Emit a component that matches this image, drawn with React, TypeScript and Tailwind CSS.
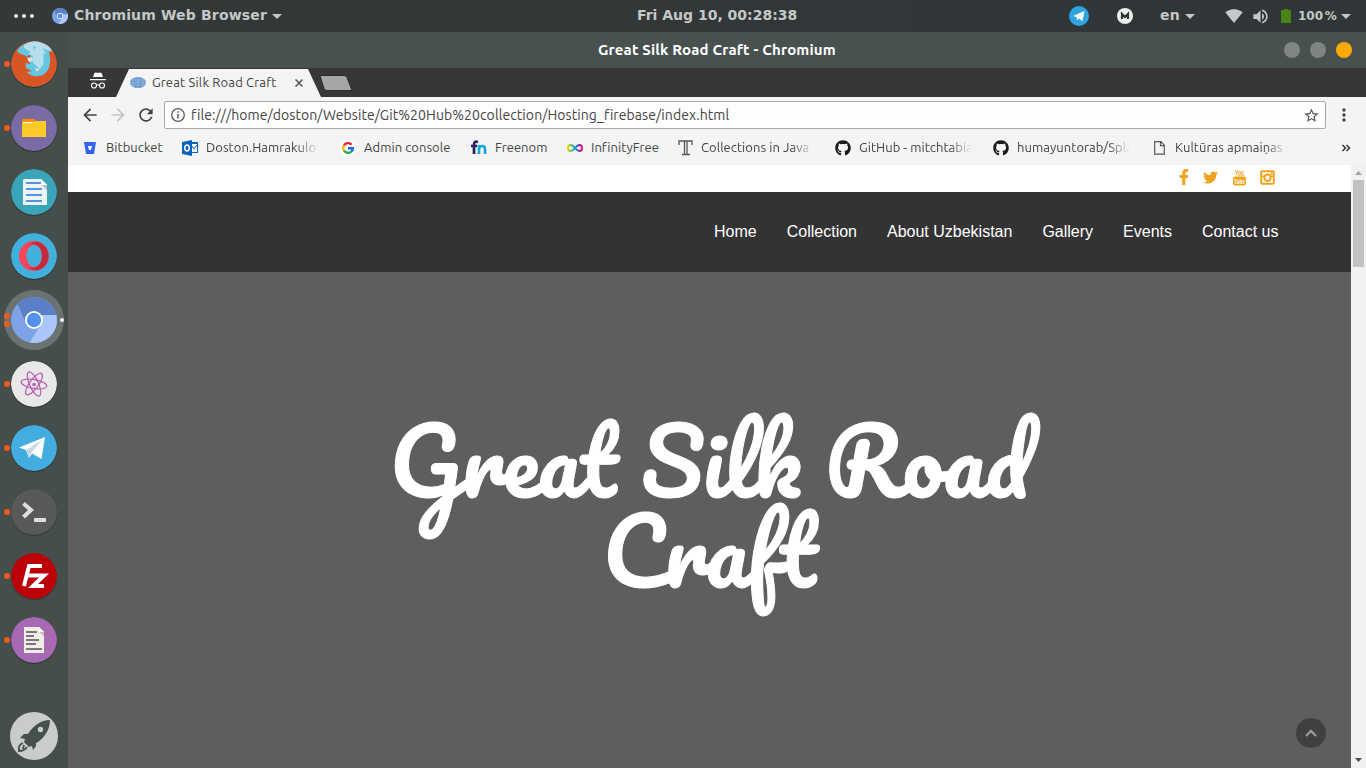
import type { ReactNode } from "react";
import { FaFacebookF, FaTwitter, FaGithub } from "react-icons/fa";
import { MdSignalWifi4Bar, MdVolumeUp, MdArrowBack, MdArrowForward, MdRefresh, MdStarBorder, MdMoreVert } from "react-icons/md";

function Caret() {
  return <svg width="10" height="5" viewBox="0 0 10 5" className="shrink-0" fill="#c5c8c6"><path d="M0 0h10L5 5z" /></svg>;
}

function ChromiumIcon({ size }: { size: number }) {
  return (
    <svg width={size} height={size} viewBox="0 0 46 46" className="block shrink-0">
      <circle cx="23" cy="23" r="23" fill="#7ea3e8" />
      <path d="M6.500 7A23 23 0 0 1 45.400 18H23L15 26z" fill="#5b80c8" />
      <path d="M45.400 18A23 23 0 0 1 18.700 45.600L29 29 23 18z" fill="#aac6fa" />
      <circle cx="23" cy="23" r="9" fill="#fff" />
      <circle cx="23" cy="23" r="7.200" fill="#5490ee" />
    </svg>
  );
}

function GoogleIcon() {
  return (
    <svg width="16" height="16" viewBox="0 0 16 16" fill="none" strokeWidth="2.400">
      <circle cx="8" cy="8" r="8" fill="#fff" />
      <path d="M4 5.400A4.800 4.800 0 0 1 11.500 4.600" stroke="#f5182d" />
      <path d="M4 5.400A4.800 4.800 0 0 0 4 10.700" stroke="#fbbc05" />
      <path d="M4 10.700A4.800 4.800 0 0 0 11.200 11.600" stroke="#19b34a" />
      <path d="M8 8.200h4.900A4.800 4.800 0 0 1 11.200 11.600" stroke="#1769f0" />
    </svg>
  );
}

function TopBar() {
  return (
    <header className="flex h-8 shrink-0 items-center bg-[linear-gradient(90deg,#333838,#303637)] font-['DejaVu_Sans'] text-[14px] font-bold text-[#c5c8c6]">
      <div className="flex w-[637px] items-center">
        <svg width="20" height="4" className="ml-[14px]" fill="#e8e8e8"><circle cx="2" cy="2" r="2" /><circle cx="10" cy="2" r="2" /><circle cx="18" cy="2" r="2" /></svg>
        <div className="ml-[18px]"><ChromiumIcon size={16} /></div>
        <span className="ml-[6px] w-[194px] whitespace-nowrap pb-[2px] tracking-[0.16px]">Chromium Web Browser</span>
        <div className="ml-[4px]"><Caret /></div>
      </div>
      <span className="w-[432px] whitespace-nowrap pb-[2px]">Fri Aug 10, 00:28:38</span>
      <svg width="20" height="20" viewBox="0 0 20 20" className="shrink-0"><circle cx="10" cy="10" r="10" fill="#2ca5e0" /><path d="M4 10 15.500 5 13.500 15 9.500 12.500 7.800 14.500V11.200z" fill="#fff" /></svg>
      <svg width="16" height="16" viewBox="0 0 16 16" className="ml-7 shrink-0"><circle cx="8" cy="8" r="8" fill="#eee" /><path d="M5 11V6l3 3 3-3v5" fill="none" stroke="#333" strokeWidth="2.200" /></svg>
      <span className="ml-[27px] w-[25px] pb-[2px] tracking-[0.3px]">en</span>
      <Caret />
      <MdSignalWifi4Bar className="ml-[30px] size-[18px] shrink-0" />
      <MdVolumeUp className="ml-[8px] size-[19px] shrink-0" />
      <svg width="10" height="14" className="ml-[11px] shrink-0" fill="#4a8416"><path d="M0 1h3V0h4v1h3v13H0z" /></svg>
      <span className="ml-[7px] w-[43px] whitespace-nowrap text-[12px] [word-spacing:-2.500px]">100 %</span>
      <Caret />
    </header>
  );
}

function Launcher({ dots = 0, children }: { dots?: number; children: ReactNode }) {
  return (
    <div className="flex h-16 w-full shrink-0 items-center">
      <div className="flex w-[11px] shrink-0 flex-col items-start gap-[2px] pl-1">
        {dots > 0 && <i className="size-[6px] rounded-full bg-[#ee5a24]" />}
        {dots > 1 && <i className="size-[6px] rounded-full bg-[#ee5a24]" />}
      </div>
      {children}
    </div>
  );
}

const disc = "block shrink-0 rounded-full shadow-[0_1px_1px_#0005]";

function Sidebar() {
  return (
    <aside className="flex w-[68px] shrink-0 flex-col bg-[#464e4c]">
      <Launcher dots={1}>
        <svg className={disc} width="46" height="46" viewBox="0 0 46 46">
          <circle cx="23" cy="23" r="23" fill="#d85626" />
          <path d="M6 10C12 0 32-5 42 12 39 9 37 10 39 16 40 24 37 34 28 35c-5 1-10-1-12-4l5-1c-3-2-8-2-6-8l4 1c0-3-3-3-3-7-3-3-7-2-10-6z" fill="#66c5df" />
          <path d="M13 4c5-4 13-5 18-2 5 1 8 3 10 8l-5-1-4-2 3 6-2-1c2 6 1 9-2 13l-3 4c-1-5-6-5-7-10l1-4-4-1 1-4-3-1-3-2z" fill="#b7deed" />
          <path d="M6 10l4-5 2 3 3-1-3 4zM22 5l3 1-2 3zM32 12l3 5-2 8z" fill="#66c5df" />
          <path d="M17 16l5 1-2 4-3-1zM24 27l4 1-2 3z" fill="#f2dfcf" /><path d="M16 15l4-1-2 3z" fill="#bd3d25" />
        </svg>
      </Launcher>
      <Launcher dots={1}>
        <svg className={disc} width="46" height="46" viewBox="0 0 46 46"><circle cx="23" cy="23" r="23" fill="#7a6ba4" /><path d="M11 14h13v5H11z" fill="#fb8c00" /><path d="M12 17h11v3H12z" fill="#fff" /><path d="M11 18h10l3-2h11v16H11z" fill="#ffca28" /></svg>
      </Launcher>
      <Launcher>
        <svg className={disc} width="46" height="46" viewBox="0 0 46 46"><circle cx="23" cy="23" r="23" fill="#3aa4b8" /><path d="M13 10h17l6 6v20H12V11z" fill="#eef3f3" /><path d="M30 10l6 6v5l-6-5z" fill="#b9c4c8" /><path d="M30 10l6 6h-6z" fill="#fff" /><path d="M15 14h15M15 20h16M15 26h16M15 32h16" stroke="#5294e2" strokeWidth="2" /></svg>
      </Launcher>
      <Launcher>
        <svg className={disc} width="46" height="46" viewBox="0 0 46 46"><circle cx="23" cy="23" r="23" fill="#41b0dc" /><circle cx="23" cy="23" r="15" fill="#fc4457" /><path d="M18 12c4-4 9-4 12-2a15 15 0 0 1 0 26c-3 2-8 2-12-2 8 3 13-3 13-11s-5-14-13-11z" fill="#c12b3e" /><ellipse cx="23" cy="23" rx="7.700" ry="11" fill="#41b0dc" /></svg>
      </Launcher>
      <div className="flex h-16 shrink-0 items-center pl-1">
        <div className="flex size-[60px] items-center rounded-full bg-[#6b7372]">
          <div className="flex w-[7px] shrink-0 flex-col gap-[2px]"><i className="size-[6px] rounded-full bg-[#ee5a24]" /><i className="size-[6px] rounded-full bg-[#ee5a24]" /></div>
          <ChromiumIcon size={46} />
          <i className="ml-[3px] size-1 shrink-0 rounded-full bg-white" />
        </div>
      </div>
      <Launcher dots={1}>
        <svg className={disc} width="46" height="46" viewBox="0 0 46 46"><circle cx="23" cy="23" r="23" fill="#e8e8e8" /><g fill="none" stroke="#b85bb0" strokeWidth="1.200"><ellipse cx="23" cy="23" rx="13" ry="4.500" transform="rotate(10 23 23)" /><ellipse cx="23" cy="23" rx="13" ry="4.500" transform="rotate(66 23 23)" /><ellipse cx="23" cy="23" rx="13" ry="4.500" transform="rotate(-54 23 23)" /></g><circle cx="23" cy="23.500" r="1.700" fill="#b85bb0" /></svg>
      </Launcher>
      <Launcher dots={1}>
        <svg className={disc} width="46" height="46" viewBox="0 0 46 46"><circle cx="23" cy="23" r="23" fill="#43ade0" /><path d="M8 22.500 34 12 30.500 34 21 28.500 18 33 15 25z" fill="#fff" /><path d="M15 25 31 15 20 28 18 33z" fill="#c8d6e8" /></svg>
      </Launcher>
      <Launcher dots={1}>
        <svg className={disc} width="46" height="46" viewBox="0 0 46 46"><circle cx="23" cy="23" r="23" fill="#595959" /><path d="M12.500 14.500 20 21l-7.500 7M23 31h12" fill="none" stroke="#ddd" strokeWidth="4" /></svg>
      </Launcher>
      <Launcher dots={1}>
        <svg className={disc} width="46" height="46" viewBox="0 0 46 46"><circle cx="23" cy="23" r="23" fill="#bc0208" /><path d="M13 33 18 13H31M16 22.500H26M22 22.500H33L22 33H33" fill="none" stroke="#fff" strokeWidth="4" /></svg>
      </Launcher>
      <Launcher dots={1}>
        <svg className={disc} width="46" height="46" viewBox="0 0 46 46"><circle cx="23" cy="23" r="23" fill="#a769b2" /><path d="M13 10h15l5 5v21H13z" fill="#eeeee3" /><path d="M28 10l5 5v4l-5-4z" fill="#bdbdb5" /><path d="M28 10l5 5h-5z" fill="#fff" /><path d="M15 15h11M15 19h8M15 23h13M15 27h10M15 32h16" stroke="#846f8b" strokeWidth="2" /></svg>
      </Launcher>
      <div className="mt-auto flex h-16 items-center pl-[10px]">
        <svg width="48" height="48" viewBox="0 0 48 48"><circle cx="24" cy="24" r="24" fill="#c9cccb" /><path d="M40 8c0 8-4 16-12 22l-2 1v3l-3 4-1-4-3 1-5-5 1-3-5-1 4-4h4C23 14 31 8 40 8z" fill="#46504e" /><circle cx="30.500" cy="17.500" r="2.700" fill="#c9cccb" /><path d="M13 31c-5 2-4 5-4 8 4 0 6-1 8-4M14 33l-1 4" fill="none" stroke="#46504e" strokeWidth="1.800" /></svg>
      </div>
    </aside>
  );
}

function TabStrip() {
  return (
    <div className="flex h-[29px] shrink-0 bg-[#373737]">
      <svg width="18" height="18" viewBox="0 0 18 18" className="ml-[21px] mt-[4px] shrink-0"><path d="M5.500 1l1.500-.5 2 .5 2-.5 1.500.5 1.500 4H4zM1 7h16v1.300H1z" fill="#fff" /><circle cx="5" cy="13.500" r="2.500" fill="none" stroke="#fff" strokeWidth="1.200" /><circle cx="13" cy="13.500" r="2.500" fill="none" stroke="#fff" strokeWidth="1.200" /><path d="M7.500 13h3" stroke="#fff" /></svg>
      <div className="ml-[9px] flex w-[205px] items-center bg-[#f4f4f4] pl-[14px] [clip-path:polygon(0_100%,13px_1px,192px_1px,205px_100%)]">
        <svg width="16" height="11" viewBox="0 0 16 11" className="shrink-0"><ellipse cx="8" cy="5.500" rx="8" ry="5.500" fill="#6798d0" /><path d="M1 3h14M0 5.500h16M1 8h14M8 0v11M4 1c-2 3-2 6 0 9M12 1c2 3 2 6 0 9" stroke="#9ebee0" strokeWidth=".7" fill="none" /></svg>
        <span className="ml-[6px] w-[143px] whitespace-nowrap text-[13px] tracking-[0.17px] text-[#444]">Great Silk Road Craft</span>
        <svg width="8" height="8" viewBox="0 0 8 8" className="shrink-0"><path d="M.5.5l7 7m0-7l-7 7" stroke="#555" strokeWidth="1.500" /></svg>
      </div>
      <svg width="34" height="17" viewBox="0 0 34 17" className="-ml-[2px] mt-[7px]"><path d="M1 .5h24q2 0 3 2l5 13H8q-2 0-3-2z" fill="#a6a6a6" stroke="#2b2b2b" /></svg>
    </div>
  );
}

function Toolbar() {
  return (
    <div className="flex h-[36px] shrink-0 items-center bg-[#f4f4f4] text-[#444]">
      <MdArrowBack className="ml-[12px] size-5 shrink-0" />
      <MdArrowForward className="ml-[8px] size-5 shrink-0 text-[#c4c4c4]" />
      <MdRefresh className="ml-[8px] size-5 shrink-0" />
      <div className="ml-[8px] flex h-7 w-[1162px] items-center rounded-[2px] border border-[#a8a8a8] bg-[#fdfdfd] pl-[6px] pr-[5px]">
        <svg width="14" height="14" viewBox="0 0 14 14" className="shrink-0" fill="none" stroke="#5a5a5a"><circle cx="7" cy="7" r="6.300" strokeWidth="1.300" /><path d="M7 6v4.500M7 3.300v1.500" strokeWidth="1.500" /></svg>
        <span className="ml-[6px] flex-1 whitespace-nowrap text-[14px] tracking-[0.083px] text-[#444]">file:///home/doston/Website/Git%20Hub%20collection/Hosting_firebase/index.html</span>
        <MdStarBorder className="size-[17px] text-[#555]" />
      </div>
      <MdMoreVert className="ml-[8px] size-5 shrink-0" />
    </div>
  );
}

function Bookmark({ icon, label, box, fade = false }: { icon: ReactNode; label: string; box: string; fade?: boolean }) {
  return (
    <div className={`flex shrink-0 items-center ${box}`}>
      <div className="mr-2 flex w-4 shrink-0 justify-center">{icon}</div>
      <span className={`overflow-hidden whitespace-nowrap ${fade ? "w-[113px] [mask-image:linear-gradient(90deg,#000_80%,transparent)]" : ""}`}>{label}</span>
    </div>
  );
}

function Bookmarks() {
  return (
    <div className="flex h-8 shrink-0 items-center bg-[#f4f4f4] pb-[3px] pl-[14px] text-[13px] tracking-[0.06px] text-[#444]">
      <Bookmark box="w-[100px]" label="Bitbucket" icon={<svg width="12" height="12" viewBox="0 0 12 12"><path d="M0 0h12l-2 12H2z" fill="#2f64f5" /><path d="M4 4h4l-1 4H5z" fill="#fff" /></svg>} />
      <Bookmark fade box="w-[158px]" label="Doston.Hamrakulov" icon={<svg width="16" height="16" viewBox="0 0 16 16" className="shrink-0"><path d="M8 2h8v11H8z" fill="#0b65bf" /><path d="M10 4h5v8h-5z" fill="#fff" /><path d="M10 6l2 3 3-4" stroke="#0b65bf" fill="none" /><path d="M0 2l10-2v16L0 14z" fill="#0b65bf" /><ellipse cx="5" cy="8" rx="2.200" ry="3" fill="none" stroke="#fff" strokeWidth="1.500" /></svg>} />
      <Bookmark box="w-[131px]" label="Admin console" icon={<GoogleIcon />} />
      <Bookmark box="w-[96px]" label="Freenom" icon={<svg width="16" height="15" viewBox="0 0 16 15" fill="none" strokeWidth="2.700"><path d="M7 2C4 1 3 2 3 5v9M0 6h6" stroke="#29235c" /><path d="M8 14V5m0 4c1-4 6-4 6 0v5" stroke="#16a7e0" /></svg>} />
      <Bookmark box="w-[110px]" label="InfinityFree" icon={<svg width="16" height="10" viewBox="0 0 16 10" fill="none" strokeWidth="2"><defs><linearGradient id="inf"><stop stopColor="#f4d000" /><stop offset=".3" stopColor="#26b875" /><stop offset=".55" stopColor="#158eea" /><stop offset=".8" stopColor="#7d239f" /><stop offset="1" stopColor="#df1780" /></linearGradient></defs><path d="M8 5C5 1 1 1 1 5s4 4 7 0 7-4 7 0-4 4-7 0z" stroke="url(#inf)" /></svg>} />
      <Bookmark fade box="w-[158px]" label="Collections in Java" icon={<svg width="15" height="16" viewBox="0 0 15 16" fill="none" stroke="#555"><path d="M1 5V1h13v4M6.500 1v13M9 1v13M4 14.500h8" strokeWidth="1.300" /></svg>} />
      <Bookmark fade box="w-[158px]" label="GitHub - mitchtabian" icon={<FaGithub className="size-4 text-[#1b1b1b]" />} />
      <Bookmark fade box="w-[158px]" label="humayuntorab/Splash" icon={<FaGithub className="size-4 text-[#1b1b1b]" />} />
      <Bookmark fade box="w-[191px]" label="Kultūras apmaiņas p" icon={<svg width="11" height="14" viewBox="0 0 11 14" fill="none" stroke="#555"><path d="M.7.7H7l3.300 3.500v9H.7zM6.500.7v4h4" strokeWidth="1.200" /></svg>} />
      <svg width="9" height="8" viewBox="0 0 9 8" fill="none" stroke="#333" strokeWidth="1.500"><path d="M.5 1l3 3-3 3M4.500 1l3 3-3 3" /></svg>
    </div>
  );
}

function Website() {
  return (
    <div className="flex min-h-0 flex-1">
      <main className="flex flex-1 flex-col">
        <div className="flex h-[27px] shrink-0 items-center justify-end bg-white pb-[3px] pr-[76px] text-[#f0a31c]">
          <FaFacebookF className="mr-[14px] h-[16px] w-[10px]" />
          <FaTwitter className="mr-[14px] size-[15px]" />
          <svg width="15" height="17" viewBox="0 0 15 17" className="mr-[13px]"><rect x="1" y="7.500" width="13" height="9" rx="2" fill="#f0a31c" /><text x="3" y="6.500" fontFamily="Liberation Sans Narrow, Liberation Sans" fontSize="8.500" fontWeight="bold" textLength="9" lengthAdjust="spacingAndGlyphs" fill="#f0a31c">You</text><text x="2" y="15" fontFamily="Liberation Sans" fontSize="8" fontWeight="bold" textLength="11" lengthAdjust="spacingAndGlyphs" fill="#fff">Tube</text></svg>
          <svg width="15" height="15" viewBox="0 0 15 15" fill="none" stroke="#f0a31c" strokeWidth="2"><rect x="1.200" y="1.200" width="12.600" height="12.600" rx="1" /><circle cx="7.500" cy="7.700" r="3.200" /><path d="M1 6.200h3.500M10.500 6.200H14" strokeWidth="1.500" /><path d="M10.500 3.700h2" /></svg>
        </div>
        <nav className="flex h-20 shrink-0 items-center justify-end gap-[30px] bg-[#333] pr-[72.500px] font-['Liberation_Sans'] text-[16px] text-white">
          <a>Home</a><a>Collection</a><a>About Uzbekistan</a><a>Gallery</a><a>Events</a><a>Contact us</a>
        </nav>
        <section className="relative flex flex-1 flex-col items-center bg-[#5d5e60] pt-[143px]">
          <h1 className="text-center font-['Pacifico','Lato'] text-[90px] font-normal leading-[90px] text-white [-webkit-text-stroke:1px_white]">
            <span className="block whitespace-nowrap">Great Silk Road</span>
            <span className="block whitespace-nowrap">Craft</span>
          </h1>
          <button className="absolute bottom-5 right-[25px] flex size-[30px] items-center justify-center rounded-full bg-[#404042]">
            <svg width="12" height="8" viewBox="0 0 12 8" fill="none" stroke="#999" strokeWidth="2.400"><path d="M1 7l5-5 5 5" /></svg>
          </button>
        </section>
      </main>
      <div className="flex w-[15px] shrink-0 flex-col items-center bg-[#f1f1f1]">
        <svg width="9" height="15" viewBox="0 0 9 15"><path d="M1 10h7L4.500 6z" fill="#a3a3a3" /></svg>
        <div className="h-[87px] w-[11px] bg-[#c1c1c1]" />
        <svg width="9" height="15" viewBox="0 0 9 15" className="mt-auto"><path d="M1 5h7L4.500 9z" fill="#505050" /></svg>
      </div>
    </div>
  );
}

export default function App() {
  return (
    <div className="flex h-[768px] w-[1366px] flex-col overflow-hidden font-['Ubuntu','Noto_Sans',sans-serif]">
      <TopBar />
      <div className="flex min-h-0 flex-1">
        <Sidebar />
        <div className="flex min-w-0 flex-1 flex-col">
          <div className="flex h-9 shrink-0 items-center bg-[#48514f] pr-[14px]">
            <span className="ml-[530px] mr-auto whitespace-nowrap text-[15px] font-bold tracking-[0.17px] text-white">Great Silk Road Craft - Chromium</span>
            <div className="flex gap-[10px]"><i className="size-4 rounded-full bg-[#808483]" /><i className="size-4 rounded-full bg-[#808483]" /><i className="size-4 rounded-full bg-[#ffa905]" /></div>
          </div>
          <TabStrip />
          <Toolbar />
          <Bookmarks />
          <Website />
        </div>
      </div>
    </div>
  );
}
